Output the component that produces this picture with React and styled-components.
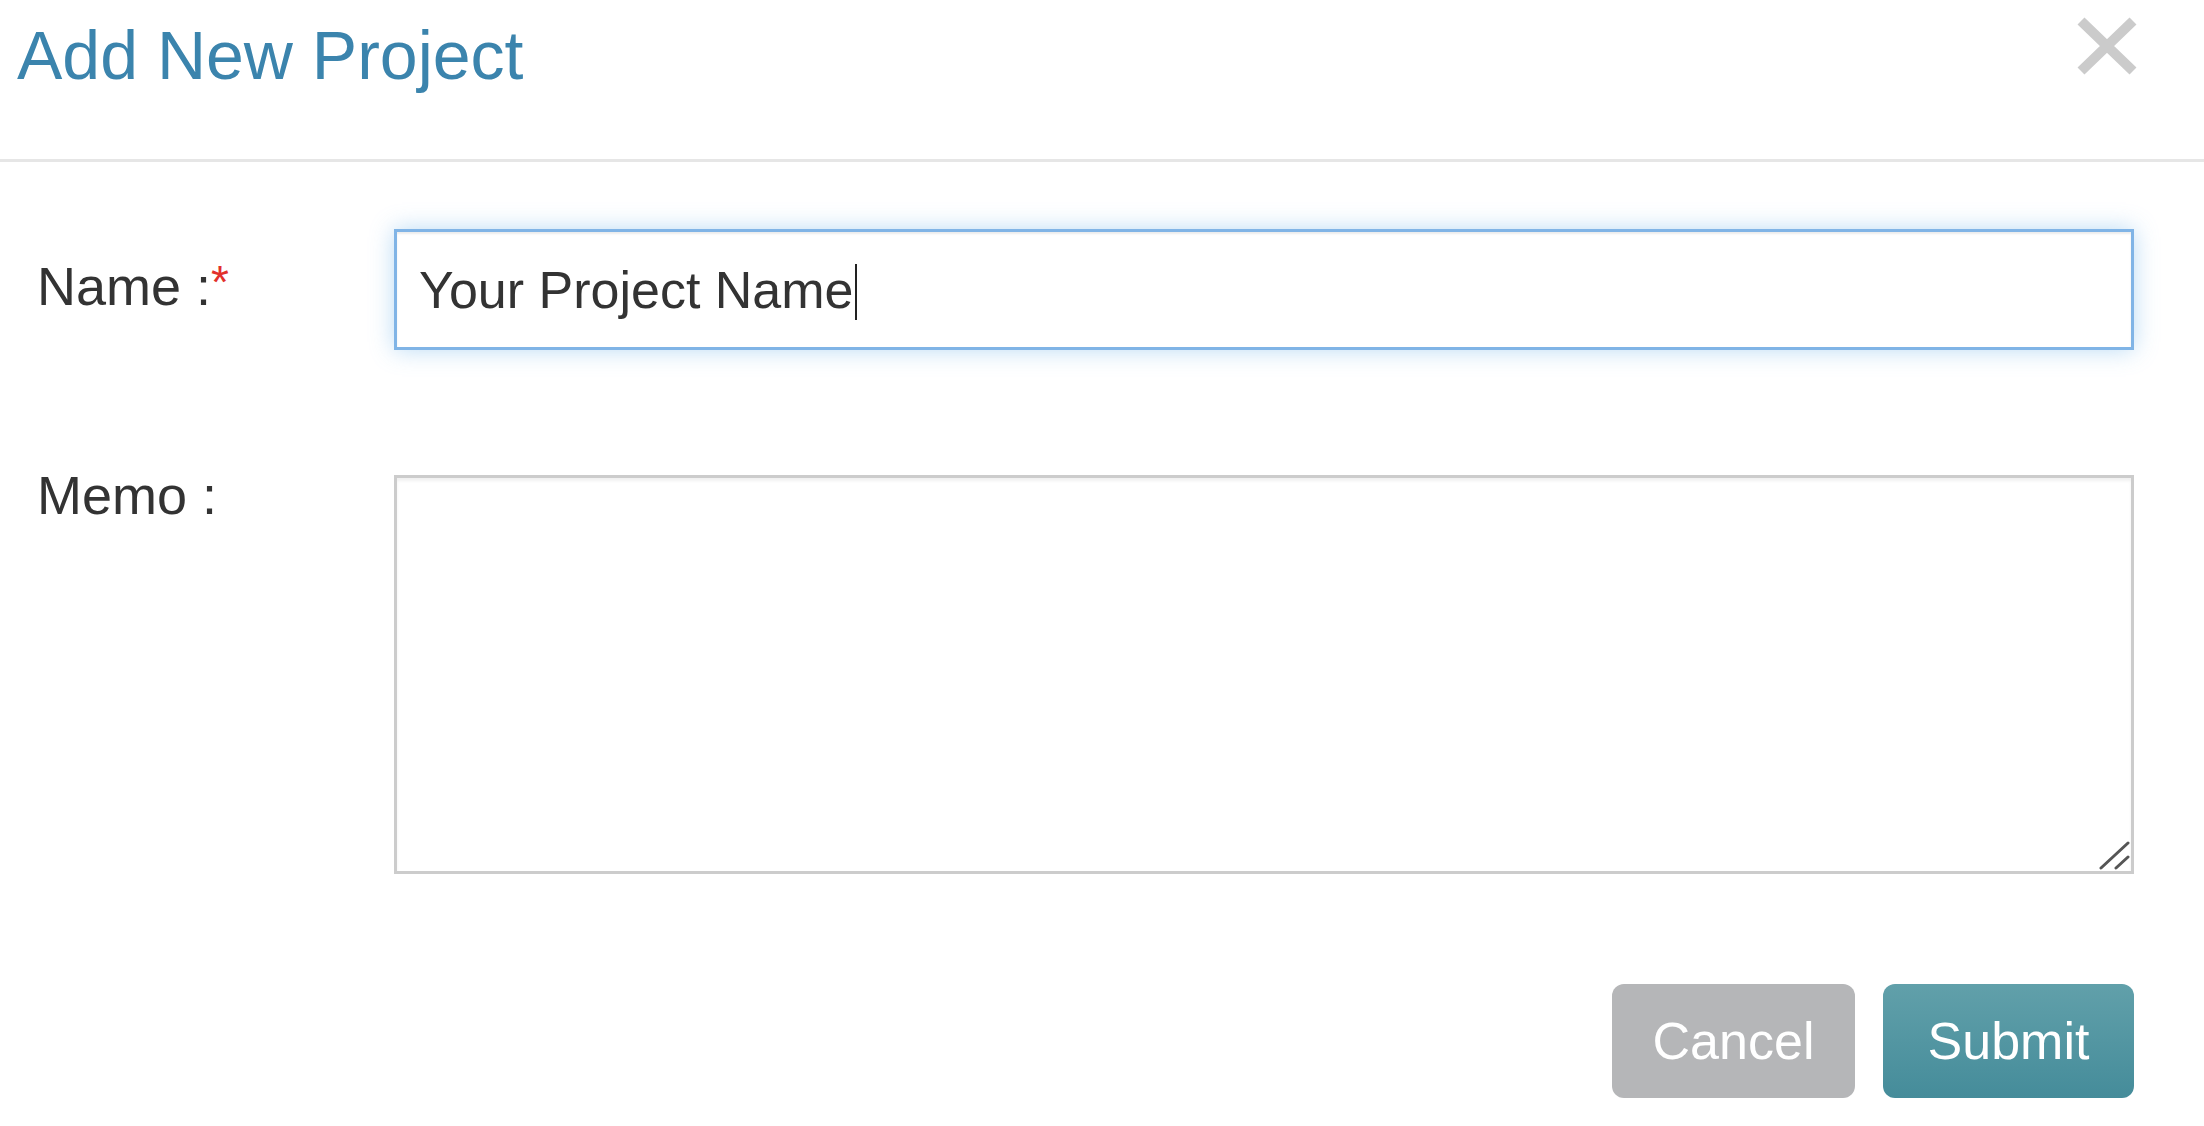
import React, { useEffect, useRef, useState } from "react";
import styled, { createGlobalStyle } from "styled-components";

const GlobalStyle = createGlobalStyle`
  html, body {
    margin: 0;
    padding: 0;
    background: #ffffff;
  }
  body {
    font-family: "Liberation Sans", Arial, Helvetica, sans-serif;
    color: #333333;
  }
  * {
    box-sizing: border-box;
  }
`;

const FONT = `"Liberation Sans", Arial, Helvetica, sans-serif`;

const Modal = styled.div`
  width: 2204px;
  height: 1126px;
  background: #ffffff;
  display: flex;
  flex-direction: column;
`;

const Header = styled.header`
  display: flex;
  justify-content: space-between;
  align-items: flex-start;
  height: 162px;
  padding: 17px 67px 0 17px;
  border-bottom: 3px solid #e6e6e6;
`;

const Title = styled.h4`
  margin: 0;
  font-size: 68px;
  line-height: 76px;
  font-weight: 400;
  color: #3b84ad;
`;

const CloseButton = styled.button`
  border: 0;
  padding: 0;
  margin: 0;
  background: transparent;
  width: 60px;
  height: 58px;
  display: flex;
  cursor: pointer;
`;

const Body = styled.div`
  display: flex;
  flex-direction: column;
  padding: 67px 70px 0 37px;
`;

const Row = styled.div`
  display: grid;
  grid-template-columns: 357px 1fr;
  align-items: start;
  margin-bottom: ${(p) => p.$gap || 0}px;
`;

const Label = styled.label`
  font-size: 54px;
  line-height: 62px;
  color: #333333;
  padding-top: ${(p) => p.$offset || 0}px;
  margin-top: ${(p) => p.$lift || 0}px;
`;

const Required = styled.span`
  color: #e2302b;
  font-size: 46px;
  vertical-align: top;
  line-height: 54px;
`;

const Field = styled.div`
  position: relative;
  width: 100%;
`;

const TextInput = styled.input`
  display: block;
  width: 100%;
  height: 121px;
  padding: 0 22px;
  font-family: ${FONT};
  font-size: 52px;
  color: #333333;
  caret-color: transparent;
  background: #ffffff;
  border: 3px solid #80b4e6;
  border-radius: 0;
  outline: none;
  box-shadow: inset 0 2px 2px rgba(0, 0, 0, 0.075), 0 0 22px rgba(102, 175, 233, 0.45);
`;

const Caret = styled.span`
  position: absolute;
  top: 35px;
  width: 2px;
  height: 56px;
  background: #222222;
  pointer-events: none;
`;

const Memo = styled.textarea`
  display: block;
  width: 100%;
  height: 399px;
  padding: 16px 22px;
  font-family: ${FONT};
  font-size: 52px;
  color: #333333;
  background: #ffffff;
  border: 3px solid #cccccc;
  border-radius: 0;
  outline: none;
  resize: none;
  box-shadow: inset 0 3px 3px rgba(0, 0, 0, 0.06);
`;

const Grip = styled.svg`
  position: absolute;
  right: 4px;
  bottom: 4px;
  pointer-events: none;
`;

const Footer = styled.div`
  display: flex;
  justify-content: flex-end;
  gap: 28px;
  padding: 110px 70px 0 0;
`;

const Button = styled.button`
  height: 114px;
  width: ${(p) => p.$width}px;
  border: 0;
  border-radius: 12px;
  font-family: ${FONT};
  font-size: 52px;
  color: #ffffff;
  padding: 0;
  cursor: pointer;
  background: ${(p) =>
    p.$primary
      ? "linear-gradient(to bottom, #61a0aa 0%, #458c9a 100%)"
      : "#b5b6b8"};
`;

const NAME = "Your Project Name";

function App() {
  const nameRef = useRef(null);
  const [caretX, setCaretX] = useState(null);

  useEffect(() => {
    const el = nameRef.current;
    if (el) {
      el.focus();
      el.setSelectionRange(el.value.length, el.value.length);
    }
    const ctx = document.createElement("canvas").getContext("2d");
    ctx.font = `52px ${FONT}`;
    setCaretX(25 + ctx.measureText(NAME).width + 1);
  }, []);

  return (
    <>
      <GlobalStyle />
      <Modal>
        <Header>
          <Title>Add New Project</Title>
          <CloseButton aria-label="Close">
            <svg width="60" height="58" viewBox="0 0 60 58">
              <path
                d="M4 4 L56 54 M56 4 L4 54"
                stroke="#cbcbcb"
                strokeWidth="10"
                fill="none"
              />
            </svg>
          </CloseButton>
        </Header>

        <Body>
          <Row $gap={125}>
            <Label $offset={26}>
              Name :<Required>*</Required>
            </Label>
            <Field>
              <TextInput ref={nameRef} defaultValue={NAME} />
              {caretX !== null && <Caret style={{ left: caretX }} />}
            </Field>
          </Row>
          <Row>
            <Label $lift={-11}>Memo :</Label>
            <Field>
              <Memo />
              <Grip width="32" height="30" viewBox="0 0 32 30">
                <path
                  d="M3 28 L30 3 M18 28 L30 17"
                  stroke="#555555"
                  strokeWidth="3"
                  strokeLinecap="round"
                  fill="none"
                />
              </Grip>
            </Field>
          </Row>
        </Body>

        <Footer>
          <Button $width={243}>Cancel</Button>
          <Button $width={251} $primary>
            Submit
          </Button>
        </Footer>
      </Modal>
    </>
  );
}

export default App;
